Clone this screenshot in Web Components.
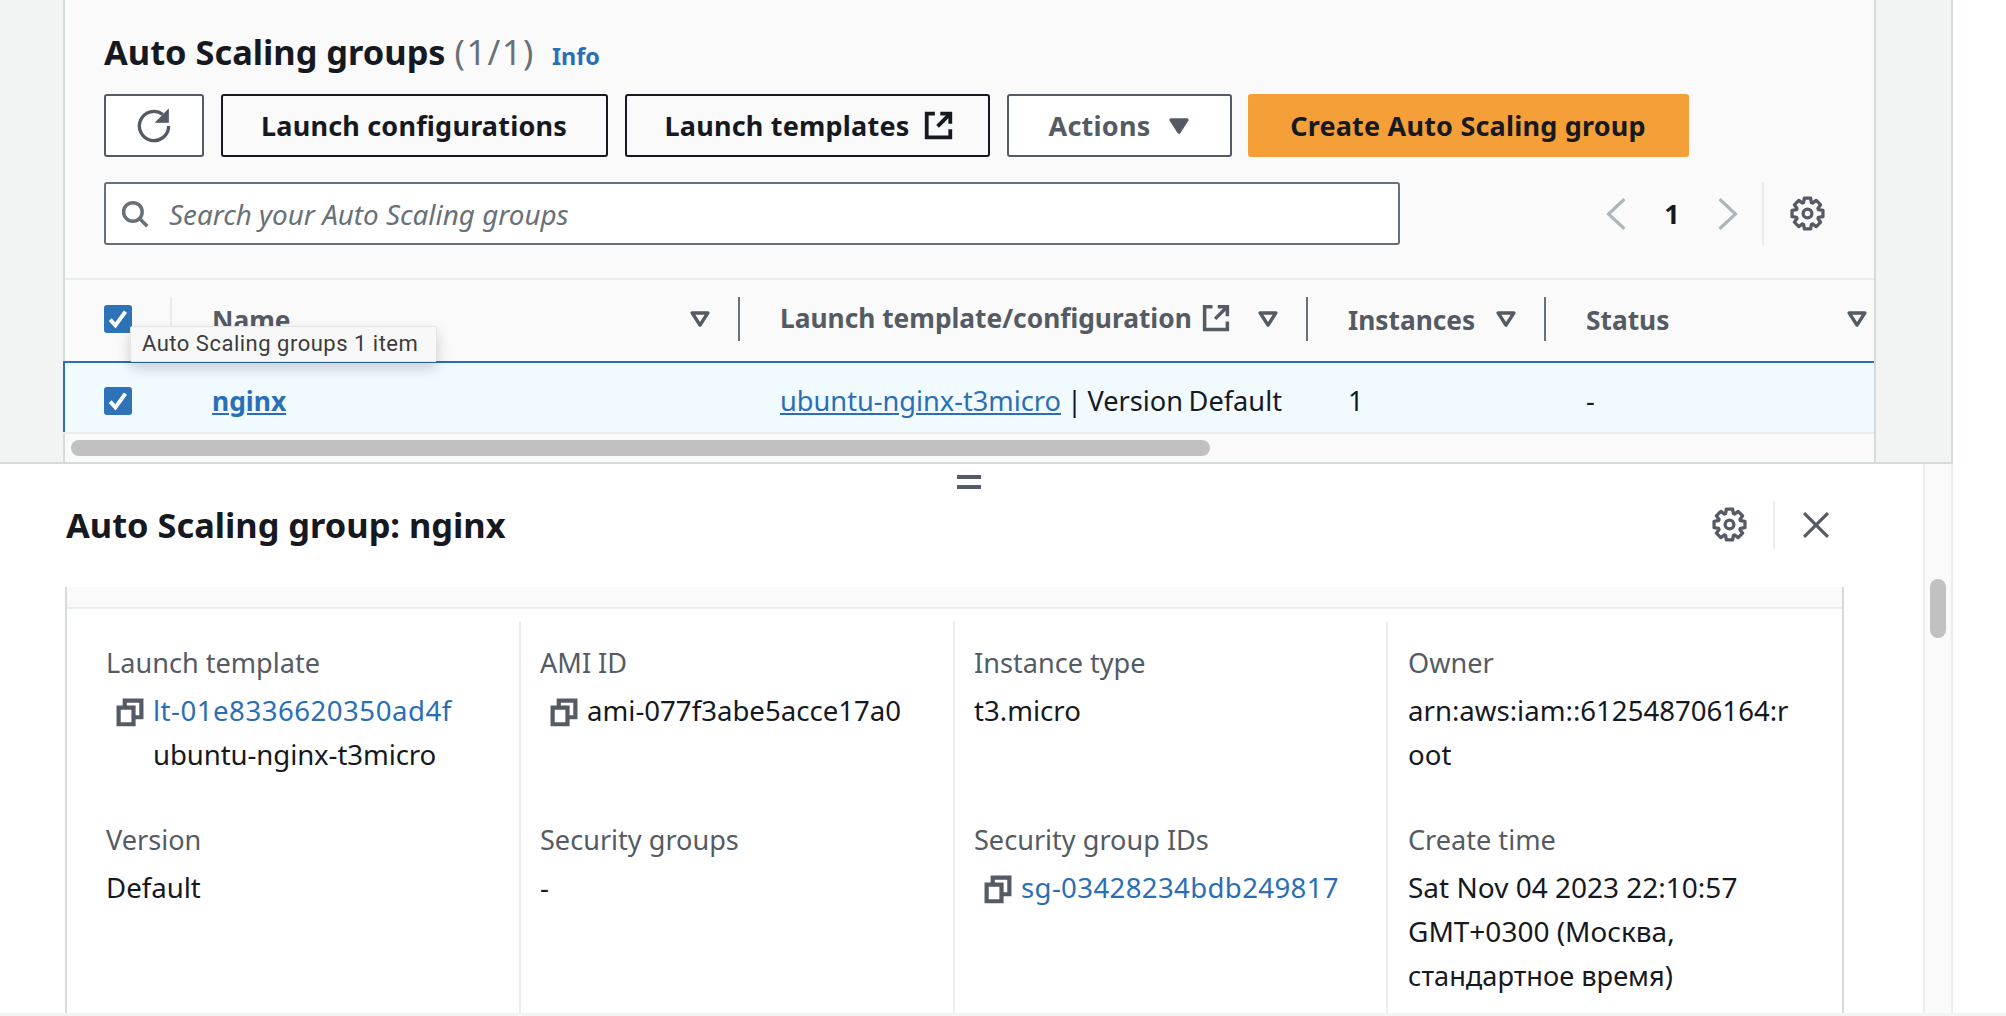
<!DOCTYPE html>
<html lang="en">
<head>
<meta charset="utf-8">
<title>Auto Scaling groups</title>
<style>
  html, body { margin: 0; height: 100%; overflow: hidden; background: #fff; }
  body {
    width: 2006px;
    height: 1016px;
    font-family: "Noto Sans", "Open Sans", sans-serif;
    font-size: 27.6px;
    line-height: 44px;
    color: #16191f;
    display: flex;
    flex-direction: column;
  }
  .muted { color: #687078; font-weight: 400; letter-spacing: 1.5px; }
</style>
</head>
<body>

<asg-table-panel>
  <span slot="title">Auto Scaling groups <span class="muted">(1/1)</span></span>
  <aws-button slot="tools" variant="icon" width="99.5"><aws-icon name="refresh" size="36" stroke="1.5"></aws-icon></aws-button>
  <aws-button slot="tools" variant="dark" width="387">Launch configurations</aws-button>
  <aws-button slot="tools" variant="dark" width="365" style="padding-left:4px">Launch templates<aws-icon name="external" size="29" stroke="2.1"></aws-icon></aws-button>
  <aws-button slot="tools" variant="normal" width="225" style="padding-left:4px">Actions<aws-icon name="caret" size="28"></aws-icon></aws-button>
  <aws-button slot="tools" variant="primary" width="441" style="margin-left:-1px">Create Auto Scaling group</aws-button>
</asg-table-panel>

<asg-split-panel heading="Auto Scaling group: nginx">
  <detail-item label="Launch template">
    <copy-value link style="letter-spacing:.5px">lt-01e8336620350ad4f<span slot="sub" style="letter-spacing:-.1px">ubuntu-nginx-t3micro</span></copy-value>
  </detail-item>
  <detail-item label="AMI ID"><copy-value>ami-077f3abe5acce17a0</copy-value></detail-item>
  <detail-item label="Instance type">t3.micro</detail-item>
  <detail-item label="Owner" wrap>arn:aws:iam::612548706164:root</detail-item>
  <detail-item label="Version">Default</detail-item>
  <detail-item label="Security groups">-</detail-item>
  <detail-item label="Security group IDs"><copy-value link style="letter-spacing:.35px">sg-03428234bdb249817</copy-value></detail-item>
  <detail-item label="Create time"><span style="font-size:28px">Sat Nov 04 2023 22:10:57 GMT+0300 (Москва, <span style="font-size:27.2px">стандартное время)</span></span></detail-item>
</asg-split-panel>

<script>
// gear outline, 8 rounded teeth in a 16x16 box
function gearPath() {
  const pts = [];
  for (let i = 0; i < 8; i++) {
    const a = (i * Math.PI) / 4 - Math.PI / 2;
    const w = 0.2;
    [[5.3, -w - 0.14], [7.2, -w], [7.2, w], [5.3, w + 0.14]].forEach(([r, d]) => {
      pts.push((8 + r * Math.cos(a + d)).toFixed(2) + " " + (8 + r * Math.sin(a + d)).toFixed(2));
    });
  }
  return "M" + pts.join("L") + "Z";
}

const ICONS = {
  refresh: `<path d="M14.5 8a6.5 6.5 0 1 1-2.6-5.2"/><path d="M14.3 .8v5.5H9z" fill="currentColor" stroke-width=".6"/>`,
  external: `<path d="M6 1.5H1.5v13h13V10"/><path d="M9 1.5h5.5V7"/><path d="M14.5 1.5 7.5 8.5"/>`,
  caret: `<path d="M3.5 4.5h9L8 11.5z" fill="currentColor" stroke-linejoin="round"/>`,
  filter: `<path d="M3.5 4.5h9L8 11.5z" stroke-linejoin="round"/>`,
  search: `<circle cx="6.8" cy="6.8" r="5.3"/><path d="m10.6 10.6 4.4 4.4"/>`,
  prev: `<path d="M11.5 1 4 8l7.5 7"/>`,
  next: `<path d="M4.5 1 12 8l-7.5 7"/>`,
  settings: `<path d="${gearPath()}" stroke-linejoin="round"/><circle cx="8" cy="8" r="2"/>`,
  close: `<path d="m1.2 1.2 13.6 13.6M14.8 1.2 1.2 14.8"/>`,
  copy: `<path d="M1.5 5.5h8.5v9.5H1.5z"/><path d="M5 5V1.5h9.5v9.5h-4" />`,
  check: `<path d="m3.2 8.4 3.2 3.6 6.2-8.6"/>`,
};

class AwsIcon extends HTMLElement {
  connectedCallback() {
    const size = this.getAttribute("size") || 28;
    const sw = this.getAttribute("stroke") || 2;
    this.attachShadow({ mode: "open" }).innerHTML = `
      <style>
        :host { display: inline-flex; flex: none; width: ${size}px; height: ${size}px; }
        svg { width: 100%; height: 100%; fill: none; stroke: currentColor; stroke-width: ${sw}; display: block; overflow: visible; }
      </style>
      <svg viewBox="0 0 16 16" aria-hidden="true">${ICONS[this.getAttribute("name")]}</svg>`;
  }
}

class AwsButton extends HTMLElement {
  connectedCallback() {
    this.attachShadow({ mode: "open" }).innerHTML = `
      <style>
        :host {
          display: inline-flex; align-items: center; justify-content: center; gap: 15px;
          box-sizing: border-box; height: 63px; flex: none;
          width: ${this.getAttribute("width")}px;
          border: 2px solid #545b64; border-radius: 3px; background: #fff;
          color: #545b64; font-weight: 700; font-size: 27px; letter-spacing: .2px;
          line-height: 1;
        }
        :host([variant="dark"]) { border-color: #16191f; color: #16191f; background: #fafafa; }
        :host([variant="primary"]) { border-color: #f59f38; background: #f59f38; color: #16191f; }
      </style>
      <slot></slot>`;
  }
}

class AwsCheckbox extends HTMLElement {
  connectedCallback() {
    this.attachShadow({ mode: "open" }).innerHTML = `
      <style>
        :host {
          display: inline-flex; align-items: center; justify-content: center; flex: none;
          width: 28px; height: 28px; border-radius: 3px; background: #2e73b8; color: #fff;
        }
      </style>
      <aws-icon name="check" size="26" stroke="2.4"></aws-icon>`;
  }
}

class HeaderCell extends HTMLElement {
  connectedCallback() {
    const sep = this.getAttribute("sep") || "#687078";
    this.attachShadow({ mode: "open" }).innerHTML = `
      <style>
        :host { display: flex; align-items: center; min-width: 0; color: #545b64; font-weight: 700; font-size: 26.3px; }
        .sep { width: 2px; height: 44px; background: ${sep}; flex: none; margin-right: 40px; }
        .text { flex: 1; display: flex; align-items: center; gap: 10px; white-space: nowrap; margin-top: var(--text-shift, 2px); }
        .caret { margin-right: var(--caret-end, 24px); }
      </style>
      <span class="sep"></span>
      <span class="text"><slot></slot></span>
      <aws-icon class="caret" name="filter" size="28" stroke="2"></aws-icon>`;
  }
}

class AsgTablePanel extends HTMLElement {
  connectedCallback() {
    const cols = "grid-template-columns: 105px 568px 568px 238px 1fr;";
    this.attachShadow({ mode: "open" }).innerHTML = `
      <style>
        :host {
          display: block; flex: none; box-sizing: border-box; width: 1953px; height: 464px;
          background: #f2f3f3; padding-left: 63px;
          border-right: 2px solid #d5dbdb; border-bottom: 2px solid #d5dbdb;
        }
        .panel {
          box-sizing: border-box; width: 1813px; height: 100%; position: relative;
          background: #fafafa; border: solid #d5dbdb; border-width: 0 2px;
        }
        .title { display: flex; align-items: baseline; gap: 17px; height: 94px; box-sizing: border-box; padding: 30px 0 0 39px; font-size: 34.4px; font-weight: 700; line-height: 44px; }
        .info { color: #2a6fb5; font-size: 23.4px; font-weight: 700; }
        .tools { display: flex; gap: 17px; padding-left: 39px; }
        .filter { display: flex; align-items: center; padding: 25px 0 33px 39px; border-bottom: 2px solid #eaeded; }
        .search {
          box-sizing: border-box; width: 1296px; height: 63px; background: #fff; font-size: 27.8px;
          border: 2px solid #687078; border-radius: 3px; display: flex; align-items: center; gap: 20px;
          padding-left: 15px; color: #687078; font-style: italic;
        }
        .search aws-icon { color: #687078; }
        .pager { display: flex; align-items: center; margin-left: 200px; }
        .page { width: 76px; text-align: center; font-weight: 700; color: #16191f; font-size: 27px; }
        .pager aws-icon { color: #aab7b8; }
        .pager .gear { color: #545b64; }
        .pager-sep { width: 2px; height: 63px; background: #eaeded; margin: 0 26px 0 18px; }
        .head, .row { display: grid; ${cols} }
        .head { height: 81px; align-items: center; padding-bottom: 3px; box-sizing: border-box; }
        .check { padding-left: 39px; display: flex; }
        .row {
          height: 73px; box-sizing: border-box; align-items: center; margin-left: -2px; padding: 6px 0 0 2px;
          background: #f1faff; border-top: 2px solid #2a6fb5; border-bottom: 2px solid #eaeded;
          box-shadow: inset 2px 0 0 #2a6fb5;
        }
        .cell { padding-left: 42px; white-space: nowrap; font-size: 27.2px; }
        .row .name { color: #2a6fb5; font-weight: 700; text-decoration: underline; font-size: 26.4px; }
        .row a { color: #2a6fb5; text-decoration: underline; }
        .rest { word-spacing: -1.6px; margin-left: -1px; }
        .thumb { height: 16px; width: 1139px; margin: 6px 0 0 6px; border-radius: 8px; background: #c1c1c1; }
        .tip {
          position: absolute; left: 65px; top: 326px; width: 307px; height: 36px; box-sizing: border-box;
          background: #f8f8f8; border: 1px solid #e4e4e4; color: #3c3c3c;
          font: 22px/34px Roboto, sans-serif; padding-left: 11px; white-space: nowrap;
          box-shadow: 0 6px 14px rgba(0,0,0,.18); border-radius: 2px; letter-spacing: .5px;
        }
      </style>
      <section class="panel">
        <div class="title"><slot name="title"></slot><span class="info">Info</span></div>
        <div class="tools"><slot name="tools"></slot></div>
        <div class="filter">
          <div class="search"><aws-icon name="search" size="28"></aws-icon><span>Search your Auto Scaling groups</span></div>
          <div class="pager">
            <aws-icon name="prev" size="34" stroke="1.5"></aws-icon>
            <span class="page">1</span>
            <aws-icon name="next" size="34" stroke="1.5"></aws-icon>
            <span class="pager-sep"></span>
            <aws-icon class="gear" name="settings" size="35" stroke="1.5"></aws-icon>
          </div>
        </div>
        <div class="head">
          <div class="check"><aws-checkbox></aws-checkbox></div>
          <header-cell sep="#eaeded">Name</header-cell>
          <header-cell style="--text-shift:-3px">Launch template/configuration<aws-icon name="external" size="28" stroke="2"></aws-icon></header-cell>
          <header-cell>Instances</header-cell>
          <header-cell style="--caret-end:3px">Status</header-cell>
        </div>
        <div class="row">
          <div class="check"><aws-checkbox></aws-checkbox></div>
          <div class="cell name">nginx</div>
          <div class="cell"><a>ubuntu-nginx-t3micro</a> <span class="rest">| Version Default</span></div>
          <div class="cell">1</div>
          <div class="cell">-</div>
        </div>
        <div class="thumb"></div>
        <div class="tip">Auto Scaling groups 1 item</div>
      </section>`;
  }
}

class AsgSplitPanel extends HTMLElement {
  connectedCallback() {
    this.attachShadow({ mode: "open" }).innerHTML = `
      <style>
        :host { display: flex; flex: 1; min-height: 0; position: relative; background: #fff; border-bottom: 3px solid #f2f3f3; }
        .main { flex: none; width: 1923px; display: flex; flex-direction: column; min-height: 0; }
        .handle { position: absolute; left: 957px; top: 11px; width: 24px; height: 14px; border: solid #545b64; border-width: 4px 0; box-sizing: border-box; }
        .top { height: 123px; flex: none; box-sizing: border-box; display: flex; align-items: center; padding: 0 93px 2px 66px; color: #545b64; }
        h2 { margin: 0; flex: 1; font-size: 34.4px; line-height: 44px; font-weight: 700; color: #16191f; }
        .div { width: 2px; height: 48px; background: #eaeded; margin: 0 27px 0 26px; }
        .box {
          flex: 1; min-height: 0; overflow: hidden; margin-left: 65px; width: 1779px; box-sizing: border-box;
          border: solid #d5dbdb; border-width: 0 2px;
        }
        .strip { height: 20px; background: #fafafa; border-bottom: 2px solid #eaeded; margin-bottom: 12px; }
        .grid { display: grid; grid-template-columns: 452px 434px 433px 1fr; grid-template-rows: auto 1fr; height: 100%; }
        .track { flex: none; width: 30px; box-sizing: border-box; background: #fafafa; border: solid #eaeded; border-width: 0 2px; padding: 115px 0 0 5px; }
        .track i { display: block; width: 16px; height: 59px; background: #c1c1c1; border-radius: 8px; }
      </style>
      <div class="main">
        <span class="handle"></span>
        <div class="top">
          <h2>${this.getAttribute("heading")}</h2>
          <aws-icon name="settings" size="35" stroke="1.5"></aws-icon>
          <span class="div"></span>
          <aws-icon name="close" size="28" stroke="1.8"></aws-icon>
        </div>
        <div class="box">
          <div class="strip"></div>
          <div class="grid"><slot></slot></div>
        </div>
      </div>
      <div class="track"><i></i></div>`;
  }
}

class DetailItem extends HTMLElement {
  connectedCallback() {
    this.attachShadow({ mode: "open" }).innerHTML = `
      <style>
        :host {
          display: block; box-sizing: border-box; padding: 20px 46px 22px 19px; border-left: 2px solid #eaeded; min-width: 0;
        }
        :host(:nth-of-type(4n+1)) { border-left: 0; padding-left: 39px; }
        :host(:nth-of-type(4n)) { padding-left: 20px; }
        :host([wrap]) .value { word-break: break-all; font-size: 27.6px; }
        .label { color: #545b64; height: 47px; font-size: 27.1px; }
      </style>
      <div class="label">${this.getAttribute("label")}</div>
      <div class="value"><slot></slot></div>`;
  }
}

class CopyValue extends HTMLElement {
  connectedCallback() {
    const link = this.hasAttribute("link");
    this.attachShadow({ mode: "open" }).innerHTML = `
      <style>
        :host { display: grid; grid-template-columns: auto 1fr; column-gap: 9px; padding-left: 10px; }
        aws-icon { color: #545b64; margin-top: 10px; }
        .v { color: ${link ? "#2a6fb5" : "inherit"}; white-space: nowrap; }
        .sub { grid-column: 2; }
      </style>
      <aws-icon name="copy" size="28" stroke="2.4"></aws-icon>
      <span class="v"><slot></slot></span>
      <span class="sub"><slot name="sub"></slot></span>`;
  }
}

customElements.define("aws-icon", AwsIcon);
customElements.define("aws-button", AwsButton);
customElements.define("aws-checkbox", AwsCheckbox);
customElements.define("header-cell", HeaderCell);
customElements.define("asg-table-panel", AsgTablePanel);
customElements.define("asg-split-panel", AsgSplitPanel);
customElements.define("detail-item", DetailItem);
customElements.define("copy-value", CopyValue);
</script>
</body>
</html>
